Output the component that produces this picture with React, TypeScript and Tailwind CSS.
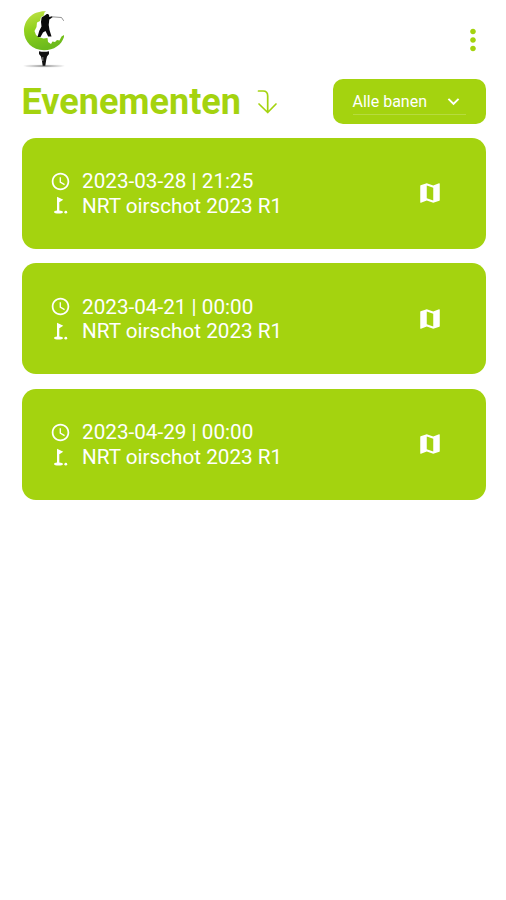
import { MdAccessTime, MdKeyboardArrowDown, MdMap, MdMoreVert } from "react-icons/md";

type GolfEvent = {
  date: string;
  time: string;
  name: string;
};

const EVENTS: GolfEvent[] = [
  { date: "2023-03-28", time: "21:25", name: "NRT oirschot 2023 R1" },
  { date: "2023-04-21", time: "00:00", name: "NRT oirschot 2023 R1" },
  { date: "2023-04-29", time: "00:00", name: "NRT oirschot 2023 R1" },
];

function Logo() {
  return (
    <svg width="46" height="60" viewBox="0 0 46 60" role="img" aria-label="Logo">
      <defs>
        <linearGradient id="ball" x1="0" y1="0" x2="0.3" y2="1">
          <stop offset="0" stopColor="#c4e34a" />
          <stop offset="0.5" stopColor="#8fd01c" />
          <stop offset="1" stopColor="#6cba1c" />
        </linearGradient>
        <radialGradient id="shade">
          <stop offset="0" stopColor="#777777" />
          <stop offset="1" stopColor="#bbbbbb" stopOpacity="0.2" />
        </radialGradient>
      </defs>
      <ellipse cx="22" cy="57" rx="20.500" ry="1.600" fill="url(#shade)" />
      <path
        fill="url(#ball)"
        d="M24 2.200C11 1.500 2 10.500 2 22c0 10.800 8.500 19.200 20 19.200 10 0 17.500-5.200 20-13.200v-2l-2.500 1.500-2 4-2.500-.5-2 2-2.500-.5-1.500 2.500-3-2-.5-4-4 .5-5-1.500-2.500-2-1.500-4 2-4 .5-4.500 3-1.500 1-4 2.500-1 1-3.500z"
      />
      <path
        fill="#0a0a0a"
        d="M23.500 6c.8-1.300 3-1.300 3.600.3l.2 1.700 2.700-.8.5 1.100-3.200 2.200-.6 5.500.8 5 2 6.500h-3.300l-2.700-5.500-2.500 1.500-2.500 4.500h-3l1.700-6 2.300-4.500-.5-4.500.6-4.500z"
      />
      <path
        d="M30 7.800 39.500 8.500 41.500 11.500"
        fill="none"
        stroke="#777777"
        strokeWidth="0.800"
        strokeLinecap="round"
      />
      <path fill="#111111" d="M17 42.200q5 1.300 10 0v2.800l-2 2.500-.8 3.500-.9 5.800h-2.600l-.9-5.800-.8-3.500-2-2.500z" />
      <path d="M20.800 48v4" stroke="#bbbbbb" strokeWidth="0.700" />
    </svg>
  );
}

function DownTurnArrow() {
  return (
    <svg
      width="22"
      height="26"
      viewBox="0 0 22 26"
      fill="none"
      stroke="#a4d30f"
      strokeWidth="1.700"
      strokeLinecap="round"
      strokeLinejoin="round"
      aria-hidden="true"
    >
      <path d="M1.500 2h4.500q4.700 0 4.700 5v16.500M2 15l8.700 8.500 8.300-8.500" />
    </svg>
  );
}

function GolfFlag() {
  return (
    <svg className="mr-[11px] size-[21px]" viewBox="0 0 21 21" fill="currentColor" aria-hidden="true">
      <path d="M7 1.800 13.300 4.800 9.300 7.300v8.200c2.200.1 3.700.7 3.700 1.500 0 .9-2 1.600-4.400 1.600s-4.600-.7-4.600-1.600c0-.7 1.200-1.200 3-1.400z" />
      <circle cx="15.800" cy="17.200" r="1.400" />
    </svg>
  );
}

function EventCard({ event }: { event: GolfEvent }) {
  return (
    <li className="flex h-[111px] items-center justify-between rounded-[14px] bg-[#a4d30f] pr-[43px] pl-[28.500px] text-white">
      <div className="pt-[1px] text-[20.700px] leading-[24.500px]">
        <p className="flex items-center">
          <MdAccessTime className="mr-[11px] size-[21px]" />
          <span>
            {event.date} | {event.time}
          </span>
        </p>
        <p className="flex items-center">
          <GolfFlag />
          <span>{event.name}</span>
        </p>
      </div>
      <button type="button" aria-label="Kaart">
        <MdMap className="size-[26px]" />
      </button>
    </li>
  );
}

export default function App() {
  return (
    <div className="min-h-screen bg-white pt-[9px] pr-[20.500px] pl-[21.500px] font-['Roboto',sans-serif]">
      <header className="flex h-[60px] items-center justify-between">
        <Logo />
        <button type="button" className="-mr-[4px] pt-[2px] text-[#a4d30f]" aria-label="Menu">
          <MdMoreVert className="size-[34px]" />
        </button>
      </header>
      <div className="mt-[10px] flex h-[45px] items-center justify-between">
        <div className="flex items-center gap-[16px]">
          <h1 className="text-[36px] leading-[44px] font-bold text-[#a4d30f]">Evenementen</h1>
          <DownTurnArrow />
        </div>
        <button
          type="button"
          className="flex h-[45px] w-[153px] items-center rounded-[10px] bg-[#a4d30f] px-[20px] text-white"
        >
          <span className="flex h-[27px] w-full items-center justify-between border-b border-white/20 pt-[1px] pr-[1px] text-[16px]">
            Alle banen
            <MdKeyboardArrowDown className="size-[23px]" />
          </span>
        </button>
      </div>
      <ul className="mt-[13.500px] flex flex-col gap-[14.700px]">
        {EVENTS.map((event) => (
          <EventCard key={event.date} event={event} />
        ))}
      </ul>
    </div>
  );
}
